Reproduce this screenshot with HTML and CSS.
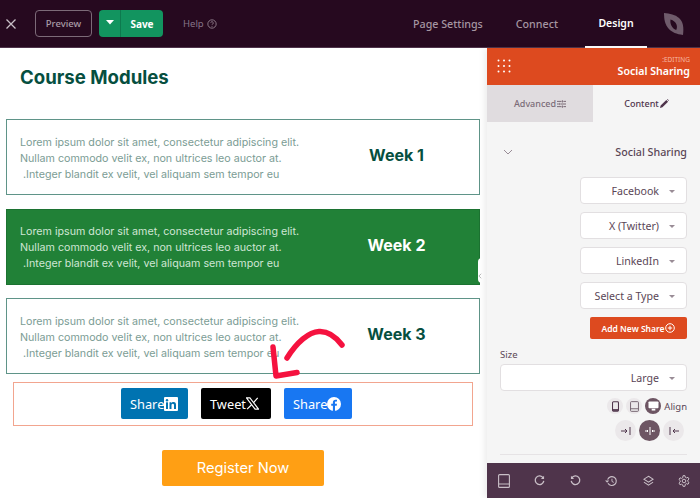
FILE: index.html
```html
<!DOCTYPE html>
<html lang="en">
<head>
<meta charset="utf-8">
<title>Course Modules</title>
<link rel="stylesheet" href="styles.css">
</head>
<body>
<div class="app">
  <header class="topbar">
    <div class="top-left">
      <svg class="close" viewBox="0 0 12 12" width="12" height="12"><path d="M1.5 1.5l9 9M10.5 1.5l-9 9" stroke="#c9bfc7" stroke-width="1.3" fill="none"/></svg>
      <button class="preview">Preview</button>
      <div class="save">
        <span class="save-caret"><svg viewBox="0 0 8 5" width="8" height="5"><path d="M0 0h8L4 4.5z" fill="#fff"/></svg></span>
        <span class="save-label">Save</span>
      </div>
      <span class="help">Help
        <svg viewBox="0 0 12 12" width="10" height="10"><circle cx="6" cy="6" r="5" fill="none" stroke="#9c8b98" stroke-width="1"/><path d="M4.5 4.7a1.5 1.5 0 1 1 2.3 1.3c-.5.3-.8.6-.8 1.1" fill="none" stroke="#9c8b98" stroke-width="1"/><circle cx="6" cy="8.8" r=".6" fill="#9c8b98"/></svg>
      </span>
    </div>
    <nav class="top-nav">
      <span class="nav-item">Page Settings</span>
      <span class="nav-item">Connect</span>
      <span class="nav-item active">Design</span>
      <svg class="logo" viewBox="0 0 22 24" width="22" height="24"><path d="M1 1c6 .5 11 1.500 15 5 4 3.500 5 9 4 17-6.500-1-11-2.500-14.500-6.500C2 12.500 1 7.500 1 1z" fill="#6f5b6b"/><path d="M7.500 7.500c3 1 5 2.500 6 5 .7 1.800.5 3.800-.3 5.500-2.300-1-4-2.500-5-4.800-.8-1.800-1-3.700-.7-5.700z" fill="#26091f"/></svg>
    </nav>
  </header>

  <div class="workspace">
    <main class="canvas">
      <h1 class="page-title">Course Modules</h1>
      <div class="cards">
        <section class="card">
          <p class="card-text">Lorem ipsum dolor sit amet, consectetur adipiscing elit.<br>Nullam commodo velit ex, non ultrices leo auctor at.<br>&nbsp;.Integer blandit ex velit, vel aliquam sem tempor eu</p>
          <h2 class="card-week">Week 1</h2>
        </section>
        <section class="card card-green">
          <p class="card-text">Lorem ipsum dolor sit amet, consectetur adipiscing elit.<br>Nullam commodo velit ex, non ultrices leo auctor at.<br>&nbsp;.Integer blandit ex velit, vel aliquam sem tempor eu</p>
          <h2 class="card-week">Week 2</h2>
        </section>
        <section class="card">
          <p class="card-text">Lorem ipsum dolor sit amet, consectetur adipiscing elit.<br>Nullam commodo velit ex, non ultrices leo auctor at.<br>&nbsp;.Integer blandit ex velit, vel aliquam sem tempor eu</p>
          <h2 class="card-week">Week 3</h2>
        </section>
      </div>
      <div class="share-box">
        <a class="share share-li">Share<svg viewBox="0 0 14 14" width="14" height="14"><rect width="14" height="14" rx="1" fill="#fff"/><rect x="2" y="5.300" width="2" height="6.700" fill="#0073b1"/><circle cx="3" cy="3.200" r="1.200" fill="#0073b1"/><path d="M5.500 5.300h1.900v1c.4-.7 1.100-1.200 2.100-1.200 1.900 0 2.500 1.200 2.500 3V12h-2V8.500c0-.9-.2-1.700-1.200-1.700s-1.300.8-1.300 1.700V12h-2z" fill="#0073b1"/></svg></a>
        <a class="share share-x">Tweet<svg viewBox="0 0 14 14" width="13" height="13"><path d="M.5 1h3.700l9.300 12H9.800z" fill="none" stroke="#fff" stroke-width="1.200"/><path d="M12.600 1 8 6.200M6 8.300 1.200 13" stroke="#fff" stroke-width="1.300" fill="none"/></svg></a>
        <a class="share share-fb">Share<svg viewBox="0 0 14 14" width="14" height="14"><circle cx="7" cy="7" r="7" fill="#fff"/><path d="M8 14V8.800h1.700l.3-2H8V5.600c0-.6.300-1.100 1.100-1.100H10V2.800S9.200 2.700 8.500 2.700C6.900 2.700 5.900 3.600 5.900 5.300v1.500H4.200v2h1.700V14z" fill="#1877f2"/></svg></a>
      </div>
      <div class="cta-row"><a class="cta">Register Now</a></div>
      <svg class="arrow" viewBox="0 0 90 60" width="90" height="60"><path d="M20 33C30 17 42 7 52 6.500 61 6 69 12 75 20" fill="none" stroke="#f5123f" stroke-width="5.500" stroke-linecap="round"/><path d="M6 22l3 29 21-3.500" fill="none" stroke="#f5123f" stroke-width="5.500" stroke-linecap="round" stroke-linejoin="round"/></svg>
      <span class="collapse-tab"><svg viewBox="0 0 5 8" width="4" height="6"><path d="M4 1 1 4l3 3" fill="none" stroke="#999" stroke-width="1"/></svg></span>
    </main>

    <aside class="panel">
      <div class="panel-head">
        <svg class="dots" viewBox="0 0 14 14" width="14" height="14"><g fill="#fff"><circle cx="1.500" cy="1.500" r="1"/><circle cx="7" cy="1.500" r="1"/><circle cx="12.500" cy="1.500" r="1"/><circle cx="1.500" cy="7" r="1"/><circle cx="7" cy="7" r="1"/><circle cx="12.500" cy="7" r="1"/><circle cx="1.500" cy="12.500" r="1"/><circle cx="7" cy="12.500" r="1"/><circle cx="12.500" cy="12.500" r="1"/></g></svg>
        <div class="head-text">
          <span class="head-small">:EDITING</span>
          <span class="head-title">Social Sharing</span>
        </div>
      </div>
      <div class="tabs">
        <div class="tab tab-off">Advanced
          <svg viewBox="0 0 12 10" width="9" height="8"><path d="M0 1.500h6M8.500 1.500H12M0 5h2.500M5 5h7M0 8.500h6M8.500 8.500H12M7.200 0v3M3.700 3.500v3M7.200 7v3" stroke="#6d5c69" stroke-width="1.200" fill="none"/></svg>
        </div>
        <div class="tab tab-on">Content
          <svg viewBox="0 0 10 10" width="9" height="9"><path d="M0 10l.7-2.700L7 1l2 2-6.300 6.300zM7.700.3 8.300 0 10 1.700l-.3.600z" fill="#4f344b"/></svg>
        </div>
      </div>
      <div class="panel-body">
        <div class="section-head">
          <svg viewBox="0 0 10 6" width="10" height="6"><path d="M1 1l4 4 4-4" fill="none" stroke="#998c96" stroke-width="1"/></svg>
          <span>Social Sharing</span>
        </div>
        <div class="selects">
          <div class="select">Facebook<i class="caret"></i></div>
          <div class="select">X (Twitter)<i class="caret"></i></div>
          <div class="select">LinkedIn<i class="caret"></i></div>
          <div class="select">Select a Type<i class="caret"></i></div>
          <button class="add-share">Add New Share
            <svg viewBox="0 0 10 10" width="10" height="10"><circle cx="5" cy="5" r="4.300" fill="none" stroke="#fff" stroke-width="1"/><path d="M5 2.800v4.400M2.800 5h4.400" stroke="#fff" stroke-width="1"/></svg>
          </button>
        </div>
        <label class="size-label">Size</label>
        <div class="select select-wide">Large<i class="caret"></i></div>
        <div class="device-row">
          <span class="dev"><svg viewBox="0 0 8 12" width="7" height="11"><rect x=".6" y=".6" width="6.800" height="10.800" rx="1" fill="none" stroke="#4f344b" stroke-width="1.200"/><rect x="1" y="9" width="6" height="2" fill="#4f344b"/></svg></span>
          <span class="dev"><svg viewBox="0 0 10 12" width="9" height="11"><rect x=".6" y=".6" width="8.800" height="10.800" rx="1" fill="none" stroke="#6d5c69" stroke-width="1"/><path d="M.6 8.500h8.800" stroke="#6d5c69"/></svg></span>
          <span class="dev dev-on"><svg viewBox="0 0 12 11" width="11" height="10"><rect x=".5" y=".5" width="11" height="7.500" rx="1" fill="#fff"/><rect x="4" y="8.500" width="4" height="2" fill="#fff"/></svg></span>
          <span class="align-label">Align</span>
        </div>
        <div class="align-row">
          <span class="al"><svg viewBox="0 0 10 8" width="10" height="8"><path d="M0 4h6M4 2l2 2-2 2M9 0v8" fill="none" stroke="#4f344b"/></svg></span>
          <span class="al al-on"><svg viewBox="0 0 10 8" width="10" height="8"><path d="M5 0v8M0 4h3M2 3l1 1-1 1M10 4H7M8 3 7 4l1 1" fill="none" stroke="#fff"/></svg></span>
          <span class="al"><svg viewBox="0 0 10 8" width="10" height="8"><path d="M10 4H4M6 2 4 4l2 2M1 0v8" fill="none" stroke="#4f344b"/></svg></span>
        </div>
        <hr class="rule">
      </div>
      <footer class="panel-foot">
        <svg viewBox="0 0 12 14" width="12" height="14"><rect x=".6" y=".6" width="10.800" height="12.800" rx="1" fill="none" stroke="#c9bfc7" stroke-width="1.100"/><path d="M.6 10h10.800" stroke="#c9bfc7"/></svg>
        <svg viewBox="0 0 12 12" width="11" height="11"><path d="M10 3.200A4.700 4.700 0 1 0 10.700 6.500" fill="none" stroke="#c9bfc7" stroke-width="1.400"/><path d="M11 .8v3.500H7.500z" fill="#c9bfc7"/></svg>
        <svg viewBox="0 0 12 12" width="11" height="11"><path d="M2 3.200A4.700 4.700 0 1 1 1.300 6.500" fill="none" stroke="#c9bfc7" stroke-width="1.400"/><path d="M1 .8v3.500h3.500z" fill="#c9bfc7"/></svg>
        <svg viewBox="0 0 14 12" width="13" height="12"><path d="M2.800 4.500A4.800 4.800 0 1 1 3.200 8.500" fill="none" stroke="#c9bfc7" stroke-width="1.200"/><path d="M0 5.500h4.500L2.300 8z" fill="#c9bfc7"/><path d="M7.500 3.500V6.500l2 1" fill="none" stroke="#c9bfc7"/></svg>
        <svg viewBox="0 0 12 12" width="11" height="12"><path d="M6 .8 11 4 6 7.200 1 4zM1 7.200 6 10.600l5-3.400" fill="none" stroke="#c9bfc7" stroke-width="1.100"/></svg>
        <svg viewBox="0 0 12 12" width="12" height="12"><circle cx="6" cy="6" r="1.800" fill="none" stroke="#c9bfc7"/><path d="M5 .7h2l.3 1.600 1.200.6 1.500-.6 1 1.700-1.200 1.100v1.400l1.200 1.100-1 1.700-1.500-.6-1.200.6L7 11.300H5l-.3-1.500-1.200-.6-1.500.6-1-1.700 1.200-1.100V5.600L1 4.500 2 2.800l1.500.6 1.200-.6z" fill="none" stroke="#c9bfc7"/></svg>
      </footer>
    </aside>
  </div>
</div>
</body>
</html>
```
FILE: styles.css
```css
* { box-sizing: border-box; }
html, body { margin: 0; height: 100%; }
body { font-family: "Noto Sans", "Open Sans", sans-serif; overflow: hidden; background: #fff; }
.app { width: 700px; height: 498px; display: flex; flex-direction: column; }

.topbar { height: 48px; flex: none; display: flex; justify-content: space-between; background: #26091f; border-bottom: 1px solid #4f344b; }
.top-left { display: flex; align-items: center; padding-left: 5px; height: 47px; }
.close { margin-right: 18px; }
.preview { width: 57px; height: 27px; padding: 0; background: transparent; border: 1px solid #7c6a78; border-radius: 4px; color: #a99ba6; font: 500 9.500px "Noto Sans", sans-serif; }
.save { display: flex; height: 27px; margin-left: 7px; background: #12945f; border-radius: 4px; color: #fff; font-weight: 700; font-size: 10px; overflow: hidden; }
.save-caret { width: 22px; display: flex; align-items: center; justify-content: center; border-right: 1px solid #0d7a4e; padding-bottom: 2px; }
.save-label { width: 42px; display: flex; align-items: center; justify-content: center; }
.help { display: flex; align-items: center; gap: 3px; margin-left: 20px; color: #87758a; font-size: 9.500px; }

.top-nav { display: flex; align-items: stretch; height: 48px; }
.nav-item { display: flex; align-items: center; padding: 0 16px 1px 17px; color: #a596a2; font-size: 10.700px; font-weight: 500; }
.nav-item:nth-child(2) { padding-right: 27px; }
.active { width: 62px; padding: 0; justify-content: center; color: #fff; font-weight: 600; font-size: 10.500px; border-bottom: 2px solid #fff; }
.logo { align-self: center; margin: 0 15px 0 16px; }

.workspace { flex: 1; min-height: 0; display: flex; }

.canvas { position: relative; flex: 1; min-width: 0; background: #fff; font-family: Inter, sans-serif; }
.page-title { margin: 0; padding: 18px 0 0 20px; height: 71px; font-size: 18.600px; line-height: 22px; font-weight: 700; color: #064f3f; }
.cards { display: flex; flex-direction: column; gap: 13.500px; padding: 0 7px 0 6px; }
.card { height: 76px; display: flex; align-items: center; border: 1px solid #5f9488; background: #fff; }
.card-green { background: #218137; border-color: #1c7231; color: #fff; }
.card-text { margin: 0; width: 311px; padding: 3px 0 0 13px; font-size: 10.700px; line-height: 16px; color: #7b9c94; flex: none; white-space: nowrap; }
.card-green .card-text { color: #cfe6d4; }
.card-week { margin: 0; flex: none; width: 157px; padding-bottom: 4px; text-align: center; font-size: 16px; font-weight: 700; color: #064f3f; }
.card-green .card-week { color: #fff; }

.share-box { margin: 7.500px 14px 0 13px; height: 44px; display: flex; justify-content: center; align-items: center; gap: 13px; padding-right: 13px; border: 1px solid #f2a58f; }
.share { height: 31px; display: flex; align-items: center; padding: 0 0 0 9px; border-radius: 2px; color: #fff; font-family: "Noto Sans", sans-serif; font-size: 12.800px; flex: none; }
.share-li { width: 67px; background: #0073b1; }
.share-x { width: 70px; background: #000; }
.share-fb { width: 68px; background: #1877f2; }

.cta-row { display: flex; justify-content: center; padding: 24px 1px 0 0; }
.cta { width: 162px; height: 36px; display: flex; align-items: center; justify-content: center; background: #ff9f14; border-radius: 2px; color: #fff; font-size: 14.700px; }

.arrow { position: absolute; left: 267px; top: 277px; }
.collapse-tab { position: absolute; right: 0; top: 210px; width: 9px; height: 25px; display: flex; align-items: center; justify-content: flex-start; background: #fff; border-radius: 4px 0 0 4px; padding-top: 10px; }

.panel { width: 213px; flex: none; display: flex; flex-direction: column; background: #f5f5f5; box-shadow: -3px 0 6px rgba(0,0,0,.07); position: relative; }
.panel-head { height: 37px; flex: none; display: flex; justify-content: space-between; align-items: center; padding: 0 10px; background: #dd4a1f; color: #fff; }
.dots { margin-bottom: 2px; }
.head-text { display: flex; flex-direction: column; align-items: flex-end; }
.head-small { font-size: 6.500px; line-height: 8px; color: #f6b9a5; margin-top: 1px; }
.head-title { font-size: 10.600px; line-height: 15px; font-weight: 600; }
.tabs { height: 37px; flex: none; display: flex; }
.tab { flex: 1; display: flex; align-items: center; justify-content: center; gap: 1px; font-size: 9px; font-weight: 500; }
.tab-off { width: 106px; flex: none; background: #e0dcdf; color: #7b6c78; }
.tab-on { background: #f5f5f5; color: #4f344b; }

.panel-body { flex: 1; min-height: 0; padding: 0 13px; display: flex; flex-direction: column; }
.section-head { display: flex; justify-content: space-between; align-items: center; height: 16px; margin-top: 22px; padding: 0 0 0 3px; font-size: 10.700px; font-weight: 500; color: #5a4656; }
.selects { display: flex; flex-direction: column; align-items: flex-end; gap: 8px; margin-top: 17px; }
.select { width: 107px; height: 27px; display: flex; align-items: center; justify-content: flex-end; gap: 10px; padding-right: 11px; background: #fff; border: 1px solid #e2dfe1; border-radius: 4px; color: #5a4656; font-size: 10.600px; flex: none; }
.caret { display: block; width: 0; height: 0; border-style: solid; border-color: #998c96 transparent transparent; border-width: 3px 3px 0; margin-top: 1px; }
.add-share { width: 97px; height: 22px; padding: 0; display: flex; align-items: center; justify-content: center; gap: 1px; background: #dd4a1f; border: 0; border-radius: 2px; color: #fff; font: 600 8.500px "Noto Sans", sans-serif; }
.size-label { margin-top: 9px; height: 14px; font-size: 9.500px; line-height: 14px; color: #5a4656; }
.select-wide { width: 187px; margin-top: 2px; }
.device-row { display: flex; justify-content: flex-end; align-items: center; gap: 3px; margin-top: 7px; height: 16px; }
.dev { width: 16px; height: 16px; display: flex; align-items: center; justify-content: center; background: #ebe8ea; border-radius: 50%; }
.dev-on { background: #6d5563; }
.align-label { font-size: 9.500px; color: #5a4656; }
.align-row { display: flex; justify-content: flex-end; gap: 3px; margin-top: 6px; padding-right: 3px; }
.al { width: 21px; height: 21px; display: flex; align-items: center; justify-content: center; background: #ebe8ea; border-radius: 50%; }
.al-on { background: #6d5563; }
.rule { width: 100%; margin: 13px 0 0; border: 0; border-top: 1px solid #e6e3e5; }

.panel-foot { height: 35px; flex: none; display: flex; align-items: center; justify-content: space-between; padding: 0 10px 0 11px; background: #4f344b; }
```
